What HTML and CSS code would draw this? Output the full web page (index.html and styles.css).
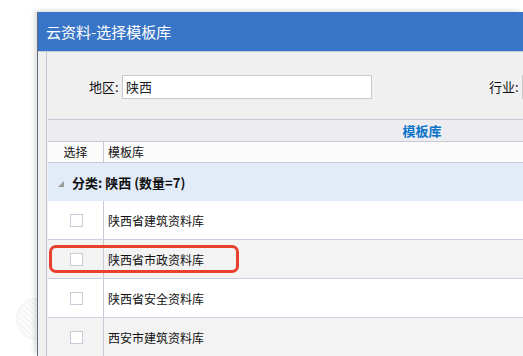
FILE: index.html
```html
<!DOCTYPE html>
<html lang="zh">
<head>
<meta charset="utf-8">
<link rel="stylesheet" href="styles.css">
</head>
<body>
<div class="watermark"></div>
<div class="dialog">
  <div class="titlebar">云资料-选择模板库</div>
  <div class="body">
    <div class="panel">
      <div class="filters">
        <label class="lbl lbl-area">地区:</label>
        <div class="input input-area">陕西</div>
        <label class="lbl lbl-ind">行业:</label>
        <div class="input input-ind"></div>
      </div>
      <div class="grid">
        <div class="hdr1"><span class="hdr1-text">模板库</span></div>
        <div class="hdr2">
          <div class="c1">选择</div>
          <div class="c2">模板库</div>
        </div>
        <div class="group">
          <svg class="tri" width="6" height="6" viewBox="0 0 6 6"><polygon points="0,6 6,0 6,6" fill="#9a9a9a"/></svg>
          <span>分类: 陕西 (数量=7)</span>
        </div>
        <div class="row">
          <div class="c1"><span class="cb"></span></div>
          <div class="c2">陕西省建筑资料库</div>
        </div>
        <div class="row alt">
          <div class="c1"><span class="cb"></span></div>
          <div class="c2">陕西省市政资料库</div>
          <div class="highlight"></div>
        </div>
        <div class="row">
          <div class="c1"><span class="cb"></span></div>
          <div class="c2">陕西省安全资料库</div>
        </div>
        <div class="row alt">
          <div class="c1"><span class="cb"></span></div>
          <div class="c2">西安市建筑资料库</div>
        </div>
      </div>
    </div>
  </div>
</div>
</body>
</html>
```
FILE: styles.css
```css
html, body {
  margin: 0;
  padding: 0;
  background: #ffffff;
  width: 523px;
  height: 356px;
  overflow: hidden;
  font-family: "Noto Sans CJK SC", "Noto Sans", sans-serif;
  color: #111;
}
.watermark {
  position: absolute;
  left: 16px;
  top: 298px;
  width: 40px;
  height: 40px;
  border-radius: 50%;
  background: repeating-linear-gradient(45deg, #f6f6f6 0 2px, #fcfcfc 2px 4px);
  border: 1px solid #f2f2f2;
}
.dialog {
  position: relative;
  margin: 12px 0 0 37px;
  width: 485px;
  height: 344px;
  overflow: hidden;
  border-left: 1px solid #5f6f80;
  box-shadow: -3px -2px 4px rgba(0,0,0,0.12);
  background: #f0f0f0;
}
.titlebar {
  height: 40px;
  background: #3875c6;
  color: #ffffff;
  font-size: 15px;
  line-height: 40px;
  padding-left: 8px;
  border-bottom: 1px solid #c9ccd4;
  box-sizing: border-box;
}
.body {
  padding-left: 8px;
  background: #f0f0f0;
  height: 304px;
}
.panel {
  border-left: 1px solid #c6c6d4;
  height: 100%;
  padding-left: 1px;
  overflow: hidden;
}
.filters {
  height: 67px;
  box-sizing: border-box;
  padding-top: 23px;
  display: flex;
  align-items: flex-start;
  font-size: 13px;
  white-space: nowrap;
}
.lbl {
  line-height: 24px;
  color: #111;
  flex: none;
}
.lbl-area {
  margin-left: 41px;
  width: 33px;
}
.input {
  flex: none;
  height: 24px;
  box-sizing: border-box;
  border: 1px solid #c9c9c9;
  background: #ffffff;
  font-size: 13px;
  line-height: 22px;
  padding-left: 3px;
  color: #222;
}
.input-area {
  width: 250px;
}
.lbl-ind {
  margin-left: 117px;
  width: 33px;
}
.input-ind {
  width: 60px;
}
.grid {
  width: 748px;
  border-top: 1px solid #c8c8d6;
  font-size: 12px;
}
.hdr1 {
  height: 21px;
  background: #ededf1;
  border-bottom: 1px solid #c8c8d6;
  text-align: center;
  line-height: 21px;
}
.hdr1-text {
  color: #0b74c8;
  font-weight: bold;
  font-size: 13px;
}
.hdr2 {
  display: flex;
  height: 20px;
  background: #fcfbfc;
  border-bottom: 1px solid #c8c8d6;
  line-height: 20px;
}
.c1 {
  width: 55px;
  border-right: 1px solid #c8c8d6;
  text-align: center;
  display: flex;
  align-items: center;
  justify-content: center;
}
.c2 {
  padding-left: 4px;
  display: flex;
  align-items: center;
}
.group {
  height: 38px;
  background: #e2ecf8;
  display: flex;
  align-items: center;
  font-weight: bold;
  font-size: 13px;
}
.tri {
  margin-left: 10px;
  margin-right: 8px;
  margin-top: 3px;
}
.row {
  position: relative;
  display: flex;
  height: 39px;
  box-sizing: border-box;
  border-bottom: 1px solid #cfcfe0;
  background: #ffffff;
}
.row.alt {
  background: #f3f3f3;
}
.cb {
  width: 11px;
  height: 11px;
  border: 1px solid #cacad8;
  background: #ffffff;
  margin-left: 1px;
}
.highlight {
  position: absolute;
  left: 1px;
  top: 5px;
  width: 190px;
  height: 28px;
  box-sizing: border-box;
  border: 3px solid #e8402a;
  border-radius: 7px;
}
```
